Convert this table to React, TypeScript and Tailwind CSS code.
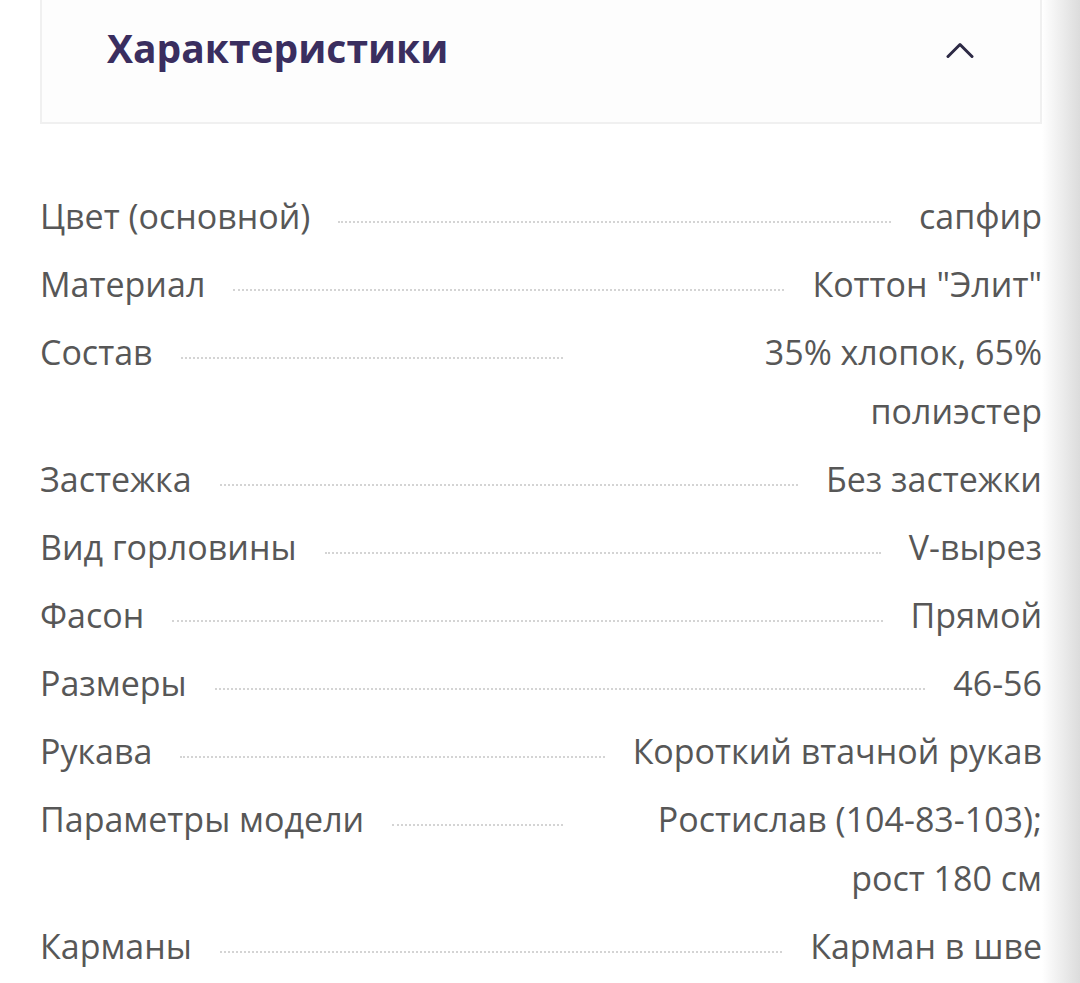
import React from 'react';

interface Spec {
  label: string;
  value: string;
}

const specs: Spec[] = [
  { label: 'Цвет (основной)', value: 'сапфир' },
  { label: 'Материал', value: 'Коттон "Элит"' },
  { label: 'Состав', value: '35% хлопок, 65% полиэстер' },
  { label: 'Застежка', value: 'Без застежки' },
  { label: 'Вид горловины', value: 'V-вырез' },
  { label: 'Фасон', value: 'Прямой' },
  { label: 'Размеры', value: '46-56' },
  { label: 'Рукава', value: 'Короткий втачной рукав' },
  { label: 'Параметры модели', value: 'Ростислав (104-83-103); рост 180 см' },
  { label: 'Карманы', value: 'Карман в шве' },
];

export default function App() {
  return (
    <div
      className="flex min-h-[983px] bg-white"
      style={{ fontFamily: '"Open Sans", "Noto Sans", sans-serif' }}
    >
      <div className="w-[1042px] shrink-0 pl-[40px]">
        {/* Accordion header */}
        <div className="flex h-[124px] items-start justify-between border-x-2 border-b-2 border-[#f0f0f0] bg-[#fdfdfd] pl-[65px] pr-[66px] pt-[19px]">
          <h2 className="text-[39px] font-bold leading-normal text-[#3a2e5f]">Характеристики</h2>
          <svg width="28" height="18" viewBox="0 0 28 18" className="mt-[22px]" fill="none">
            <polyline
              points="2,15.5 14,3.5 26,15.5"
              stroke="#2d2a45"
              strokeWidth="3"
              strokeLinecap="round"
              strokeLinejoin="round"
            />
          </svg>
        </div>

        {/* Spec list */}
        <div className="mt-[63px] flex flex-col gap-[9px]">
          {specs.map((s) => (
            <div key={s.label} className="flex items-start text-[34px] leading-[59px] text-[#575757]">
              <span className="shrink-0">{s.label}</span>
              <div className="mx-[28px] mt-[34px] flex-1 border-b-2 border-dotted border-[#d4d4d4]" />
              <span className="max-w-[45%] text-right">{s.value}</span>
            </div>
          ))}
        </div>
      </div>
      <div className="flex-1 bg-gradient-to-r from-white to-[#dcdcdc]" />
    </div>
  );
}
